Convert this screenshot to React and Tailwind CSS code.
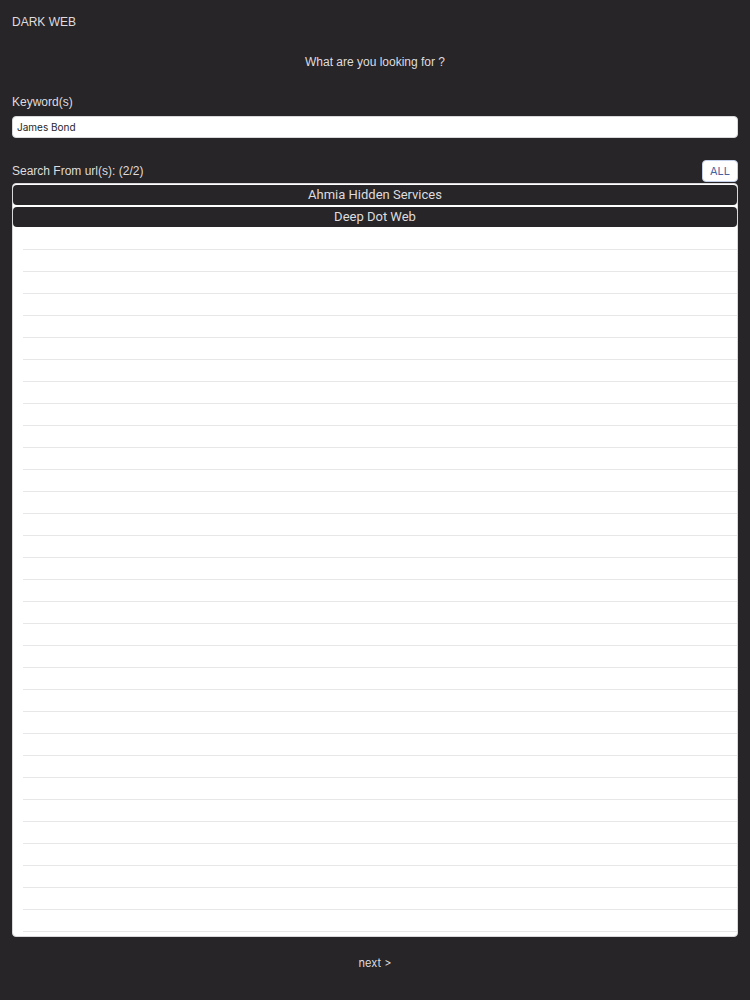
import React, { useState } from "react";

const SOURCES = ["Ahmia Hidden Services", "Deep Dot Web"];
const VISIBLE_ROWS = 34;

const SourceRow = ({ name, selected, onToggle }) => (
  <li className="h-[22px] py-px">
    <button
      type="button"
      aria-pressed={selected}
      onClick={onToggle}
      className={`block w-full h-5 rounded-sm font-[Roboto,sans-serif] text-[13px] leading-5 text-center cursor-pointer ${
        selected ? "bg-[#272528] text-[#dedcdf]" : "bg-white text-[#272528]"
      }`}
    >
      {name}
    </button>
  </li>
);

const App = () => {
  const [keyword, setKeyword] = useState("James Bond");
  const [selected, setSelected] = useState(SOURCES);

  const toggle = (name) => {
    setSelected((prev) =>
      prev.includes(name) ? prev.filter((n) => n !== name) : [...prev, name]
    );
  };

  const emptyRows = Array.from({ length: VISIBLE_ROWS - SOURCES.length });

  return (
    <main className="min-h-screen bg-[#272528] px-3 pt-3 pb-6 flex flex-col font-['Liberation_Sans',Arial,sans-serif] text-xs leading-5 text-[#dedcdf]">
      <h1 className="leading-5">DARK WEB</h1>
      <p className="mt-5 text-center leading-5">What are you looking for ?</p>

      <label htmlFor="keyword" className="mt-5 leading-5">
        Keyword(s)
      </label>
      <input
        id="keyword"
        type="text"
        value={keyword}
        onChange={(e) => setKeyword(e.target.value)}
        className="mt-1 h-[22px] w-full rounded-sm border border-[#d8d7d9] bg-white px-1 font-[Inter,sans-serif] text-[10px] text-[#272528]"
      />

      <div className="mt-[22px] flex items-center justify-between">
        <h2 className="leading-5">
          Search From url(s): ({selected.length}/{SOURCES.length})
        </h2>
        <button
          type="button"
          onClick={() => setSelected(SOURCES)}
          className="h-[22px] w-9 rounded-sm border border-[#c3cfe8] bg-white font-[Inter,sans-serif] text-[11px] text-[#4862a0] cursor-pointer"
        >
          ALL
        </button>
      </div>

      <ul className="mt-px rounded-sm border border-[#d8d7d9] bg-white pb-1">
        {SOURCES.map((name) => (
          <SourceRow
            key={name}
            name={name}
            selected={selected.includes(name)}
            onToggle={() => toggle(name)}
          />
        ))}
        {/* Blank rows fill the rest of the list */}
        {emptyRows.map((_, i) => (
          <li key={i} aria-hidden="true" className="ml-[10px] h-[22px] border-b border-[#e7e6e8]" />
        ))}
      </ul>

      <button
        type="button"
        className="mt-4 self-center font-[Inter,sans-serif] text-[11px] leading-5 cursor-pointer"
      >
        next &gt;
      </button>
    </main>
  );
};

export default App;
